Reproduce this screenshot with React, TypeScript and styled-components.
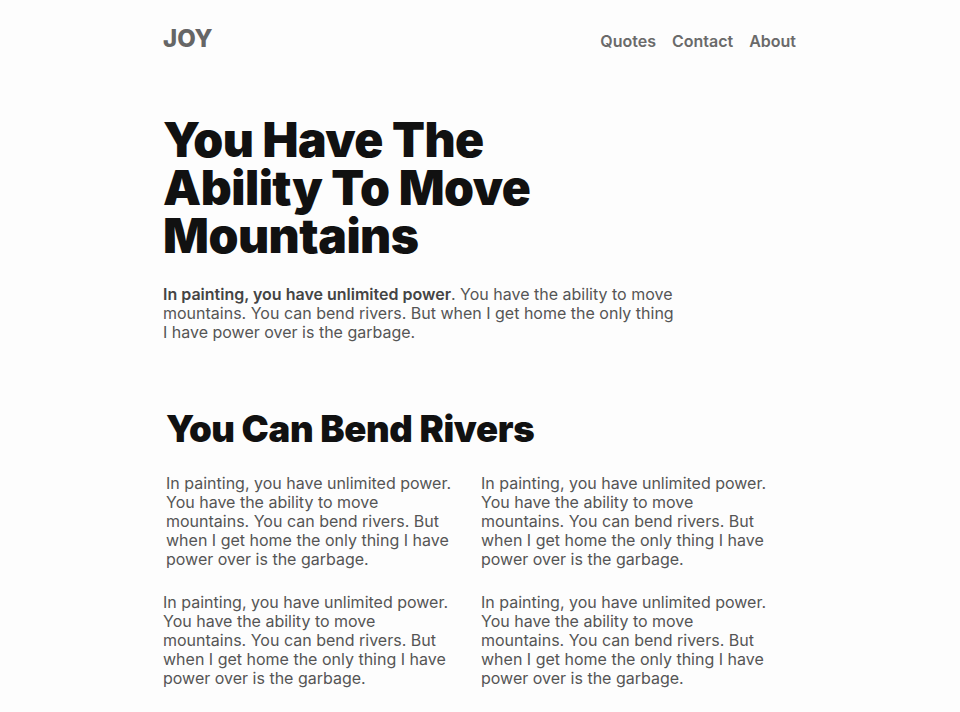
import React from "react";
import styled, { createGlobalStyle } from "styled-components";

const Global = createGlobalStyle`
  html, body { margin: 0; padding: 0; background: #fdfdfd; }
  body { font-family: Inter, "Noto Sans", sans-serif; -webkit-font-smoothing: antialiased; }
  * { box-sizing: border-box; }
`;

const Page = styled.div`
  width: 634px;
  margin: 0 auto;
`;

const Header = styled.header`
  display: flex;
  justify-content: space-between;
  align-items: center;
  height: 78px;
  padding-top: 4px;
`;

const Logo = styled.div`
  font-size: 24px;
  font-weight: 800;
  color: #666;
  letter-spacing: 0;
  margin-top: -5px;
`;

const Nav = styled.nav`
  display: flex;
  gap: 16px;
  margin-right: 1px;
`;

const NavLink = styled.a`
  font-size: 16px;
  font-weight: 600;
  color: #6a6a6a;
  text-decoration: none;
`;

const Hero = styled.section`
  padding-top: 38px;
`;

const Title = styled.h1`
  margin: 0;
  font-size: 48px;
  font-weight: 900;
  line-height: 48px;
  letter-spacing: -0.01em;
  color: #111;
  max-width: 400px;
`;

const Lead = styled.p`
  margin: 25px 0 0;
  font-size: 16px;
  line-height: 19px;
  color: #555;
  max-width: 514px;
  strong { font-weight: 600; color: #444; }
`;

const Section = styled.section`
  padding-top: 65px;
`;

const SubTitle = styled.h2`
  margin: 0 0 0 3px;
  font-size: 36.5px;
  font-weight: 900;
  line-height: 44px;
  letter-spacing: -0.01em;
  color: #111;
`;

const Grid = styled.div`
  display: grid;
  grid-template-columns: 290px 290px;
  column-gap: 28px;
  row-gap: 24px;
  margin-top: 23px;
`;

const Cell = styled.p<{ $shift?: boolean }>`
  margin: 0 0 0 ${(p) => (p.$shift ? "3px" : "0")};
  font-size: 16px;
  line-height: 19px;
  color: #555;
`;

const text =
  "In painting, you have unlimited power. You have the ability to move mountains. You can bend rivers. But when I get home the only thing I have power over is the garbage.";

export default function App() {
  return (
    <>
      <Global />
      <Page>
        <Header>
          <Logo>JOY</Logo>
          <Nav>
            <NavLink href="#">Quotes</NavLink>
            <NavLink href="#">Contact</NavLink>
            <NavLink href="#">About</NavLink>
          </Nav>
        </Header>
        <Hero>
          <Title>You Have The Ability To Move Mountains</Title>
          <Lead>
            <strong>In painting, you have unlimited power</strong>. You have the ability to move
            mountains. You can bend rivers. But when I get home the only thing I have power over
            is the garbage.
          </Lead>
        </Hero>
        <Section>
          <SubTitle>You Can Bend Rivers</SubTitle>
          <Grid>
            <Cell $shift>{text}</Cell>
            <Cell>{text}</Cell>
            <Cell>{text}</Cell>
            <Cell>{text}</Cell>
          </Grid>
        </Section>
      </Page>
    </>
  );
}
